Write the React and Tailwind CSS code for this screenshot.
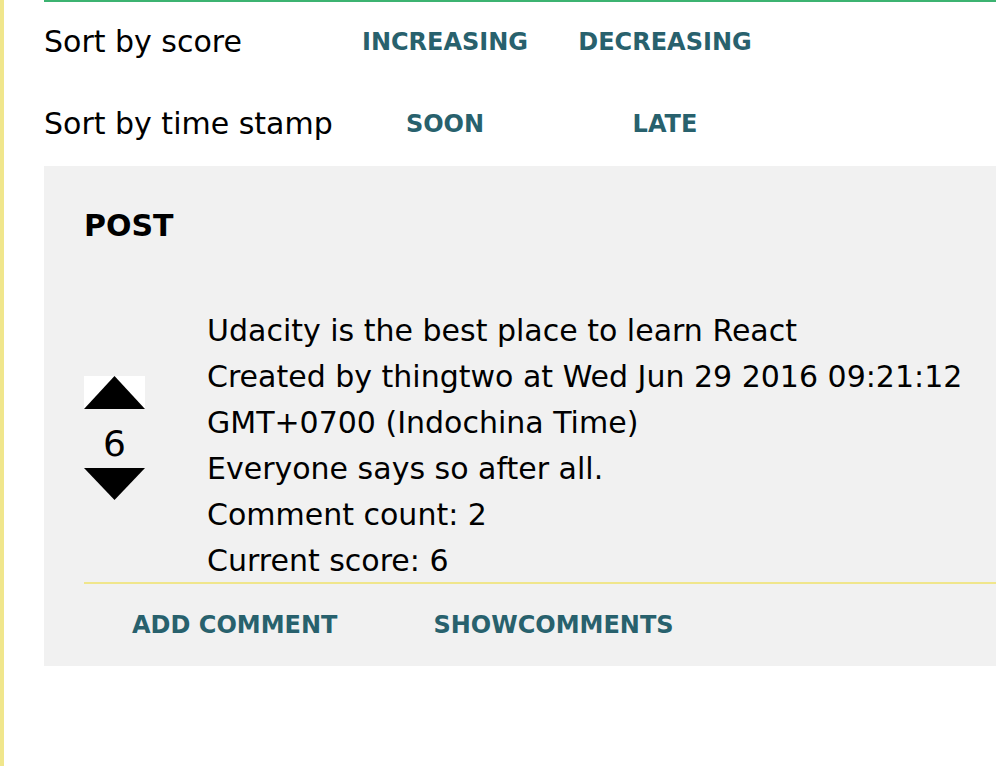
import React from "react";

const font = "font-['Comic_Sans_MS','DejaVu_Sans',sans-serif]";

function Btn({ children, className = "" }) {
  return (
    <button
      className={`font-bold text-[24px] leading-[28px] text-[#28616d] uppercase bg-transparent ${className}`}
    >
      {children}
    </button>
  );
}

export default function App() {
  return (
    <div className={`flex min-h-screen bg-white text-black ${font}`}>
      <div className="w-[4px] shrink-0 bg-[#f0e68c]" />
      <div className="ml-[40px] flex-1 flex flex-col border-t-2 border-[#3cb371]">
        <div className="grid grid-cols-[291px_220px_220px] h-[80px] items-center">
          <div className="text-[30px] leading-[46px]">Sort by score</div>
          <Btn>Increasing</Btn>
          <Btn>Decreasing</Btn>
        </div>
        <div className="grid grid-cols-[291px_220px_220px] h-[84px] items-center">
          <div className="text-[30px] leading-[46px]">Sort by time stamp</div>
          <Btn>Soon</Btn>
          <Btn>Late</Btn>
        </div>
        <div className="bg-[#f1f1f1] pl-[40px] pt-[37px]">
          <div className="font-bold text-[30px] leading-[46px]">POST</div>
          <div className="mt-[59px] flex items-start">
            <div className="mt-[68px] w-[61px] flex flex-col items-center shrink-0">
              <div className="w-[61px] h-[33px] bg-white">
                <svg width="61" height="33" viewBox="0 0 61 33">
                  <polygon points="0,33 30.5,0 61,33" fill="#000" />
                </svg>
              </div>
              <div className="mt-[17px] mb-[6px] text-[36px] leading-[36px]">6</div>
              <svg width="61" height="32" viewBox="0 0 61 32">
                <polygon points="0,0 61,0 30.5,32" fill="#000" />
              </svg>
            </div>
            <div className="ml-[62px] text-[30px] leading-[46px] h-[274px]">
              <div>Udacity is the best place to learn React</div>
              <div>
                Created by thingtwo at Wed Jun 29 2016 09:21:12 GMT+0700 (Indochina Time)
              </div>
              <div>Everyone says so after all.</div>
              <div>Comment count: 2</div>
              <div>Current score: 6</div>
            </div>
          </div>
          <div className="border-t-2 border-[#f0e68c] h-[84px] flex items-center">
            <Btn className="px-[48px]">Add comment</Btn>
            <Btn className="px-[48px]">Showcomments</Btn>
          </div>
        </div>
      </div>
    </div>
  );
}
